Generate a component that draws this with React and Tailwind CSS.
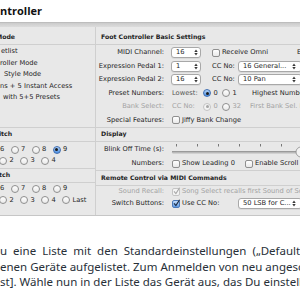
import React from 'react'

const Arrows = () => (
  <svg width="4" height="7" viewBox="0 0 4 7" className="shrink-0">
    <path d="M0.3 2.9L2 0.6L3.7 2.9Z M0.3 4.1L2 6.4L3.7 4.1Z" fill="#3a3a3a" />
  </svg>
)

function Select({ value, wide }) {
  return (
    <div
      className={
        wide
          ? 'w-[64px] h-[11px] shrink-0 bg-white border border-[#a8a8a8] rounded-[3px] shadow-[0_1px_0_rgba(0,0,0,0.06)] flex items-center justify-between pl-[4px] pr-[5px]'
          : 'w-[30px] h-[11px] shrink-0 bg-white border border-[#a8a8a8] rounded-[3px] shadow-[0_1px_0_rgba(0,0,0,0.06)] flex items-center justify-between pl-[4px] pr-[2px]'
      }
    >
      <span>{value}</span>
      <Arrows />
    </div>
  )
}

function Check({ state }) {
  if (state === 'on')
    return (
      <span className="w-[8px] h-[8px] shrink-0 rounded-[2px] border border-[#4a78b8] bg-linear-to-b from-[#c3dcf8] to-[#5e9be6] flex items-center justify-center">
        <svg width="7" height="7" viewBox="0 0 7 7" className="overflow-visible">
          <path d="M1 3.4L2.9 5.6L6.6 -0.2" fill="none" stroke="#1d2c44" strokeWidth="1.2" />
        </svg>
      </span>
    )
  if (state === 'dis')
    return (
      <span className="w-[8px] h-[8px] shrink-0 rounded-[2px] border border-[#c4c4c4] bg-[#f4f4f4] flex items-center justify-center">
        <svg width="7" height="7" viewBox="0 0 7 7" className="overflow-visible">
          <path d="M1 3.4L2.9 5.6L6.6 -0.2" fill="none" stroke="#a8a8a8" strokeWidth="1.1" />
        </svg>
      </span>
    )
  return <span className="block w-[8px] h-[8px] shrink-0 rounded-[2px] border border-[#8f8f8f] bg-linear-to-b from-white to-[#e9e9e9]" />
}

function Radio({ state }) {
  if (state === 'on')
    return (
      <span className="w-[8px] h-[8px] shrink-0 rounded-full border border-[#3f6fb3] bg-linear-to-b from-[#b3d3f7] to-[#4a8de0] flex items-center justify-center">
        <span className="w-[3px] h-[3px] rounded-full bg-[#1a1a1a]" />
      </span>
    )
  if (state === 'dis')
    return (
      <span className="w-[8px] h-[8px] shrink-0 rounded-full border border-[#c2c2c2] bg-[#f4f4f4] flex items-center justify-center">
        <span className="w-[3px] h-[3px] rounded-full bg-[#a6a6a6]" />
      </span>
    )
  return <span className="block w-[8px] h-[8px] shrink-0 rounded-full border border-[#8f8f8f] bg-linear-to-b from-white to-[#e9e9e9]" />
}

function Pick({ label, state }) {
  return (
    <div className="w-[21px] shrink-0 flex items-center">
      <Radio state={state} />
      <span className="ml-[2.5px]">{label}</span>
    </div>
  )
}

function Row({ label, h, dim, children }) {
  return (
    <div className={`${h} flex items-center`}>
      <div className={dim ? 'w-[68px] shrink-0 text-right text-[#a2a2a2]' : 'w-[68px] shrink-0 text-right'}>{label}</div>
      <div className="ml-[7px] flex items-center whitespace-nowrap">{children}</div>
    </div>
  )
}

function Slider() {
  const ticks = [5, 26, 47, 68, 89, 110]
  return (
    <svg width="130" height="15" viewBox="0 0 130 15" className="overflow-visible">
      {ticks.map((x) => (
        <rect key={x} x={x} y="2" width="1" height="2.5" fill="#777" />
      ))}
      <rect x="1" y="9" width="128" height="2.5" rx="1.2" fill="#b9b9b9" />
      <rect x="1" y="9" width="128" height="1" fill="#9a9a9a" />
      <circle cx="130" cy="10" r="5" fill="#f2f2f2" stroke="#8a8a8a" strokeWidth="0.8" />
    </svg>
  )
}

export default function App() {
  return (
    <div className="w-[300px] h-[300px] overflow-hidden bg-white">
      <div className="h-[22px] font-['Open_Sans',sans-serif] font-bold text-[11px] leading-[22px] text-[#111] whitespace-nowrap">
        ntroller
      </div>
      <div className="h-[5px] border-t border-[#bdbdbd] bg-linear-to-b from-[#cbcbcb] to-[#dcdcdc]" />

      <div className="h-[189px] flex bg-[#e8e8e8] border-b border-[#c6c6c6] font-['DejaVu_Sans',sans-serif] text-[6.7px] leading-none text-[#1e1e1e] whitespace-nowrap">
        <div className="w-[96px] shrink-0 border-r border-[#cfcfcf] flex flex-col overflow-hidden">
          <div className="h-[18px] shrink-0 border-b border-[#cfcfcf] pt-[3px] flex items-center">
            <span className="-ml-[4px] font-bold text-[6.2px]">Mode</span>
          </div>
          <div className="h-[83px] shrink-0 border-b border-[#cfcfcf] pt-[1px]">
            <div className="h-[11.5px] flex items-center pl-[1px]">etlist</div>
            <div className="h-[11.5px] flex items-center">roller Mode</div>
            <div className="h-[11.5px] flex items-center pl-[4px]">Style Mode</div>
            <div className="h-[11.5px] flex items-center">ns + 5 Instant Access</div>
            <div className="h-[11.5px] flex items-center pl-[3px]">with 5+5 Presets</div>
          </div>
          <div className="h-[14px] shrink-0 border-b border-[#cfcfcf] flex items-center">
            <span className="-ml-[1px] font-bold text-[6.2px]">itch</span>
          </div>
          <div className="h-[27px] shrink-0 border-b border-[#cfcfcf] pt-[2px]">
            <div className="h-[11px] flex items-center -ml-[10.5px]">
              <Pick label="6" />
              <Pick label="7" />
              <Pick label="8" />
              <Pick label="9" state="on" />
            </div>
            <div className="h-[11px] flex items-center -ml-[1px]">
              <Pick label="2" />
              <Pick label="3" />
              <Pick label="4" />
            </div>
          </div>
          <div className="h-[14px] shrink-0 border-b border-[#cfcfcf] flex items-center">
            <span className="-ml-[1px] font-bold text-[6.2px]">tch</span>
          </div>
          <div>
            <div className="h-[11.5px] flex items-center -ml-[10.5px]">
              <Pick label="6" />
              <Pick label="7" />
              <Pick label="8" />
              <Pick label="9" />
            </div>
            <div className="h-[11.5px] flex items-center -ml-[1px]">
              <Pick label="2" />
              <Pick label="3" />
              <Pick label="4" />
              <Pick label="Last" />
            </div>
          </div>
        </div>

        <div className="flex-1 flex flex-col overflow-hidden">
          <div className="h-[18px] shrink-0 border-b border-[#cfcfcf] pt-[3px] pl-[5px] flex items-center font-bold text-[6.2px]">
            Foot Controller Basic Settings
          </div>
          <div className="shrink-0 border-b border-[#cfcfcf] pt-[1px]">
            <Row label="MIDI Channel:" h="h-[13.5px]">
              <Select value="16" />
              <div className="w-[85px] ml-[11px] flex items-center">
                <Check />
                <span className="ml-[2px]">Receive Omni</span>
              </div>
              <span>E</span>
            </Row>
            <Row label="Expression Pedal 1:" h="h-[13.5px]">
              <Select value="1" />
              <span className="w-[26px] ml-[11px]">CC No:</span>
              <Select value="16 General..." wide />
            </Row>
            <Row label="Expression Pedal 2:" h="h-[13.5px]">
              <Select value="16" />
              <span className="w-[26px] ml-[11px]">CC No:</span>
              <Select value="10 Pan" wide />
            </Row>
            <Row label="Preset Numbers:" h="h-[13.5px]">
              <span className="w-[32px] pl-[1px] text-[#555]">Lowest:</span>
              <div className="w-[19px] flex items-center">
                <Radio state="on" />
                <span className="ml-[2.5px]">0</span>
              </div>
              <div className="w-[30px] flex items-center">
                <Radio />
                <span className="ml-[2.5px]">1</span>
              </div>
              <span>Highest Number:</span>
            </Row>
            <Row label="Bank Select:" h="h-[13.5px]" dim>
              <span className="w-[32px] pl-[1px] text-[#a2a2a2]">CC No:</span>
              <div className="w-[19px] flex items-center text-[#a2a2a2]">
                <Radio state="dis" />
                <span className="ml-[2.5px]">0</span>
              </div>
              <div className="w-[28px] flex items-center text-[#a2a2a2]">
                <Radio />
                <span className="ml-[2.5px]">32</span>
              </div>
              <span className="text-[#a2a2a2]">First Bank Sel. Number</span>
            </Row>
            <Row label="Special Features:" h="h-[13.5px]">
              <div className="w-[80px] pl-[1px] flex items-center">
                <Check />
                <span className="ml-[2px]">Jiffy Bank Change</span>
              </div>
            </Row>
          </div>

          <div className="h-[14px] shrink-0 border-b border-[#cfcfcf] pl-[5px] flex items-center font-bold text-[6.2px]">
            Display
          </div>
          <div className="shrink-0 border-b border-[#cfcfcf]">
            <Row label="Blink Off Time (s):" h="h-[15px]">
              <Slider />
            </Row>
            <Row label="Numbers:" h="h-[13px]">
              <div className="w-[74px] pl-[1px] flex items-center">
                <Check />
                <span className="ml-[2px]">Show Leading 0</span>
              </div>
              <Check />
              <span className="ml-[2px]">Enable Scroll Function</span>
            </Row>
          </div>

          <div className="h-[15px] shrink-0 border-b border-[#cfcfcf] pl-[5px] flex items-center font-bold text-[6.2px]">
            Remote Control via MIDI Commands
          </div>
          <div>
            <Row label="Sound Recall:" h="h-[11.5px]" dim>
              <div className="pl-[1px] flex items-center">
                <Check state="dis" />
                <span className="ml-[2px] text-[#a2a2a2]">Song Select recalls first Sound of Song</span>
              </div>
            </Row>
            <Row label="Switch Buttons:" h="h-[12px]">
              <div className="w-[67px] pl-[1px] flex items-center">
                <Check state="on" />
                <span className="ml-[2px]">Use CC No:</span>
              </div>
              <Select value="50 LSB for C..." wide />
            </Row>
          </div>
        </div>
      </div>

      <div className="mt-[27px] font-['Noto_Sans',sans-serif] text-[11.5px] leading-[15.5px] text-[#283038] whitespace-nowrap">
        <div className="[word-spacing:3px]">u eine Liste mit den Standardeinstellungen („Default</div>
        <div>enen Geräte aufgelistet. Zum Anmelden von neu angeschlossenen</div>
        <div>st]. Wähle nun in der Liste das Gerät aus, das Du einstellen</div>
      </div>
    </div>
  )
}
